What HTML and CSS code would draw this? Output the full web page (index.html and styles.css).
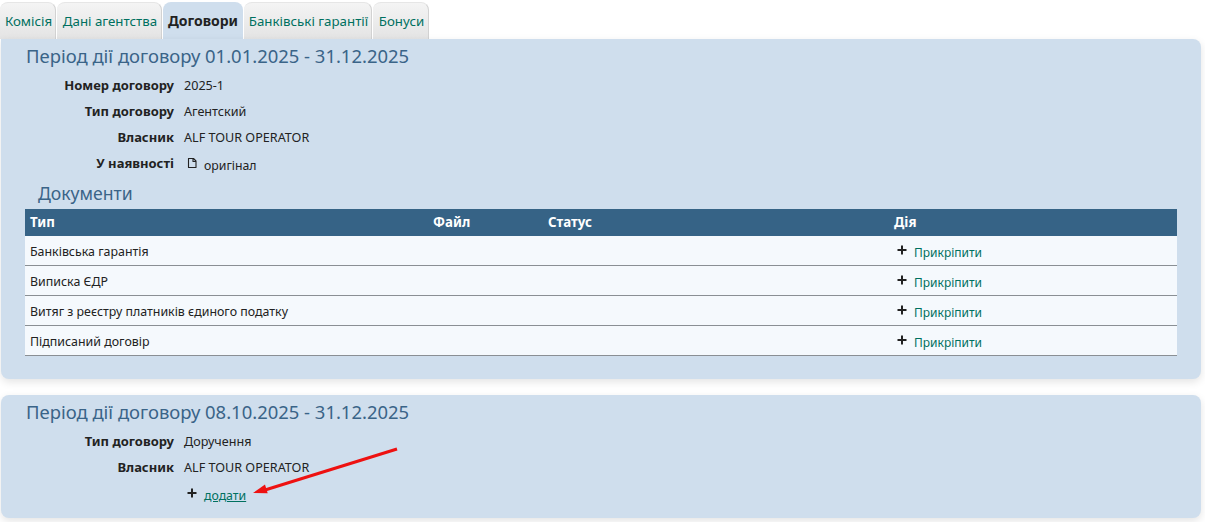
FILE: index.html
```html
<!DOCTYPE html>
<html lang="uk">
<head>
<meta charset="utf-8">
<title>Договори</title>
<link rel="stylesheet" href="styles.css">
</head>
<body>
<nav class="tabs">
  <a class="tab t1">Комісія</a>
  <a class="tab t2">Дані агентства</a>
  <a class="tab t3 active">Договори</a>
  <a class="tab t4">Банківські гарантії</a>
  <a class="tab t5">Бонуси</a>
</nav>
<section class="panel first">
  <h2 class="title">Період дії договору 01.01.2025 - 31.12.2025</h2>
  <div class="row"><div class="label">Номер договору</div><div class="value">2025-1</div></div>
  <div class="row"><div class="label">Тип договору</div><div class="value">Агентский</div></div>
  <div class="row"><div class="label">Власник</div><div class="value">ALF TOUR OPERATOR</div></div>
  <div class="row"><div class="label">У наявності</div>
    <div class="value action">
      <svg class="icon" viewBox="0 0 10 10" width="10" height="10"><path d="M1.5 .5h5l2.500 2.500v6.500h-7.500z M6 .5v3h3" fill="none" stroke="#222" stroke-width="1.100" stroke-linejoin="round"/></svg>
      <span class="low">оригінал</span>
    </div>
  </div>
  <h3 class="subtitle">Документи</h3>
  <table class="docs">
    <thead><tr><th class="c1">Тип</th><th class="c2">Файл</th><th class="c3">Статус</th><th>Дія</th></tr></thead>
    <tbody>
      <tr><td>Банківська гарантія</td><td></td><td></td><td><span class="action"><svg class="icon" viewBox="0 0 10 10" width="10" height="10"><path d="M5 .5v9M.5 5h9" stroke="#222" stroke-width="2"/></svg><a class="link">Прикріпити</a></span></td></tr>
      <tr><td>Виписка ЄДР</td><td></td><td></td><td><span class="action"><svg class="icon" viewBox="0 0 10 10" width="10" height="10"><path d="M5 .5v9M.5 5h9" stroke="#222" stroke-width="2"/></svg><a class="link">Прикріпити</a></span></td></tr>
      <tr><td>Витяг з реєстру платників єдиного податку</td><td></td><td></td><td><span class="action"><svg class="icon" viewBox="0 0 10 10" width="10" height="10"><path d="M5 .5v9M.5 5h9" stroke="#222" stroke-width="2"/></svg><a class="link">Прикріпити</a></span></td></tr>
      <tr><td>Підписаний договір</td><td></td><td></td><td><span class="action"><svg class="icon" viewBox="0 0 10 10" width="10" height="10"><path d="M5 .5v9M.5 5h9" stroke="#222" stroke-width="2"/></svg><a class="link">Прикріпити</a></span></td></tr>
    </tbody>
  </table>
</section>
<section class="panel second">
  <h2 class="title">Період дії договору 08.10.2025 - 31.12.2025</h2>
  <div class="row"><div class="label">Тип договору</div><div class="value">Доручення</div></div>
  <div class="row"><div class="label">Власник</div><div class="value">ALF TOUR OPERATOR</div></div>
  <div class="row"><div class="label"></div>
    <div class="value action">
      <svg class="icon" viewBox="0 0 10 10" width="10" height="10"><path d="M5 .5v9M.5 5h9" stroke="#222" stroke-width="2"/></svg>
      <a class="link under low">додати</a>
    </div>
  </div>
  <svg class="arrow" width="160" height="60" viewBox="0 0 160 60"><path d="M145 4L13 45" stroke="#ee1111" stroke-width="3" fill="none"/><path d="M1 48L13 39.500L15.700 48.300Z" fill="#ee1111"/></svg>
</section>
</body>
</html>
```
FILE: styles.css
```css
html, body { margin: 0; padding: 0; background: #fff; }
body {
  font-family: "Noto Sans", sans-serif;
  font-size: 12.4px;
  color: #222;
  width: 1205px;
  height: 522px;
  overflow: hidden;
}
.tabs { display: flex; gap: 1px; height: 37px; padding-top: 2px; padding-left: 0; }
.tab {
  box-sizing: border-box;
  height: 37px;
  display: flex;
  align-items: center;
  justify-content: center;
  white-space: nowrap;
  font-size: 13.3px;
  color: #00705f;
  background: linear-gradient(#f4f4f4, #e4e4e4);
  border-radius: 8px 8px 0 0;
  border-right: 1px solid #d2d2d2;
  border-top: 1px solid #e6e6e6;
  padding-left: 2px;
}
.t1 { width: 56px; }
.t2 { width: 105px; }
.t3 { width: 80px; }
.t4 { width: 128px; }
.t5 { width: 56px; }
.tab.active { background: #cfdeed; color: #222; font-weight: 700; font-size: 14px; border: none; padding-left: 0; }
.panel {
  position: relative;
  box-sizing: border-box;
  width: 1200px;
  margin-left: 1px;
  background: #cfdeed;
  border-radius: 0 8px 8px 8px;
  box-shadow: 0 3px 9px rgba(0,0,0,.11);
  padding: 5px 24px 0;
}
.first { height: 340px; }
.second { height: 123px; margin-top: 16px; border-radius: 8px; }
.title { margin: 0 0 0 1px; font-size: 18.45px; font-weight: 400; line-height: 24px; color: #3a6488; padding-bottom: 5px; }
.row { display: flex; height: 26px; line-height: 26px; }
.label { width: 149px; text-align: right; font-weight: 700; font-size: 13px; line-height: 25px; }
.value { margin-left: 10px; font-size: 12.6px; }
.action { display: inline-flex; align-items: center; gap: 7px; padding-left: 3px; }
.value.action { margin-left: 10px; font-size: 12.3px; }
.icon { margin-top: -3px; flex: none; }
.low { position: relative; top: 2px; }
.link { color: #00705f; }
td .link { font-size: 12px; padding-top: 2px; }
.under { text-decoration: underline; }
.subtitle { margin: 4px 0 0 13px; font-size: 17.6px; font-weight: 400; line-height: 24px; color: #3a6488; }
.docs { width: 1152px; margin-top: 4px; border-collapse: collapse; table-layout: fixed; }
.docs th { background: #366386; color: #fff; text-align: left; height: 26px; padding: 0 5px 1px; font-weight: 700; font-size: 13.3px; }
.docs td { background: #f5f9fd; height: 28px; padding: 1px 5px 0; border-bottom: 1px solid #8a8f94; }
.c1 { width: 393px; }
.c2 { width: 105px; }
.c3 { width: 336px; }
.arrow { position: absolute; left: 251px; top: 50px; }
```
